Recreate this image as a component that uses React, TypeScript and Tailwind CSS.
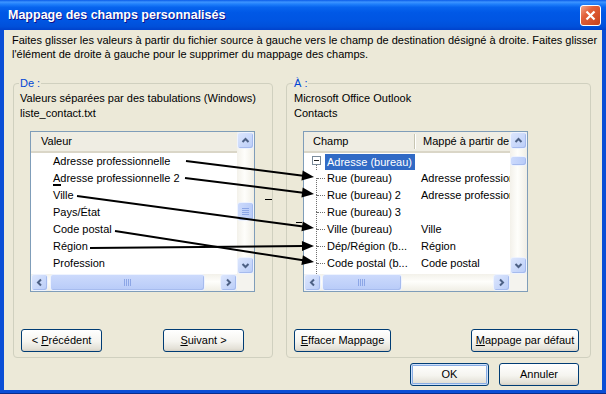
import React from "react"

type Dir = "up" | "down" | "left" | "right"

function Chevron({ dir }: { dir: Dir }) {
  const d = {
    up: "M1.5 6 L4.5 3 L7.5 6",
    down: "M1.5 3 L4.5 6 L7.5 3",
    left: "M6 1.5 L3 4.5 L6 7.5",
    right: "M3 1.5 L6 4.5 L3 7.5",
  }[dir]
  return (
    <svg width="9" height="9" viewBox="0 0 9 9">
      <path d={d} fill="none" stroke="#4D6185" strokeWidth="2" />
    </svg>
  )
}

function ScrollBtn({ dir }: { dir: Dir }) {
  return (
    <div className="w-[17px] h-[17px] shrink-0 flex items-center justify-center rounded-[3px] border border-[#EEF3FE] bg-[linear-gradient(135deg,#DCE6FD,#BACDF8)] shadow-[inset_-1px_-1px_0_#A6BBEE]">
      <Chevron dir={dir} />
    </div>
  )
}

function VScroll({ thumbTop, thumbH }: { thumbTop: number; thumbH: number }) {
  return (
    <div className="w-[17px] shrink-0 flex flex-col bg-[linear-gradient(90deg,#F3F1EA,#FEFEFB_45%,#F0EEE5)]">
      <ScrollBtn dir="up" />
      <div
        className="mx-auto w-[17px] rounded-[3px] border border-[#EEF3FE] bg-[linear-gradient(90deg,#CCDAFC,#B8CBF8)] shadow-[inset_-1px_-1px_0_#A6BBEE] flex items-center justify-center"
        style={{ marginTop: thumbTop, height: thumbH }}
      >
        {thumbH > 14 && (
          <svg width="7" height="8" viewBox="0 0 7 8">
            {[0, 2, 4, 6].map((y) => (
              <line key={y} x1="0" x2="7" y1={y + 0.5} y2={y + 0.5} stroke="#8CA6E6" />
            ))}
          </svg>
        )}
      </div>
      <div className="mt-auto">
        <ScrollBtn dir="down" />
      </div>
    </div>
  )
}

function HScroll({ thumbLeft, thumbW }: { thumbLeft: number; thumbW: number }) {
  return (
    <div className="flex-1 flex h-[17px] bg-[linear-gradient(180deg,#F3F1EA,#FEFEFB_45%,#F0EEE5)]">
      <ScrollBtn dir="left" />
      <div
        className="h-[17px] rounded-[3px] border border-[#EEF3FE] bg-[linear-gradient(180deg,#CCDAFC,#B8CBF8)] shadow-[inset_-1px_-1px_0_#A6BBEE] flex items-center justify-center"
        style={{ marginLeft: thumbLeft, width: thumbW }}
      >
        <svg width="8" height="7" viewBox="0 0 8 7">
          {[0, 2, 4, 6].map((x) => (
            <line key={x} y1="0" y2="7" x1={x + 0.5} x2={x + 0.5} stroke="#8CA6E6" />
          ))}
        </svg>
      </div>
      <div className="ml-auto">
        <ScrollBtn dir="right" />
      </div>
    </div>
  )
}

function XpButton({
  children,
  className = "",
  primary = false,
}: {
  children: React.ReactNode
  className?: string
  primary?: boolean
}) {
  return (
    <button
      className={
        "h-[23px] shrink-0 rounded-[3px] border border-[#003C74] bg-[linear-gradient(180deg,#FFFFFF_0%,#F5F4EF_55%,#E3E0D6_90%,#D6D0C5_100%)] text-[11px] leading-none text-black " +
        (primary ? "shadow-[inset_0_0_0_1px_#CEE0FA,inset_0_0_0_2px_#89ADE4] " : "") +
        className
      }
    >
      {children}
    </button>
  )
}

const leftRows = [
  "Adresse professionnelle",
  "Adresse professionnelle 2",
  "Ville",
  "Pays/État",
  "Code postal",
  "Région",
  "Profession",
]

const rightRows = [
  ["Rue (bureau)", "Adresse professionnelle"],
  ["Rue (bureau) 2", "Adresse professionnelle"],
  ["Rue (bureau) 3", ""],
  ["Ville (bureau)", "Ville"],
  ["Dép/Région (b...", "Région"],
  ["Code postal (b...", "Code postal"],
]

function LeftList() {
  return (
    <div className="ml-[16px] mt-[10px] w-[225px] h-[161px] shrink-0 border border-[#7F9DB9] bg-white flex flex-col">
      <div className="flex flex-1 min-h-0">
        <div className="flex-1 min-w-0 overflow-hidden">
          <div className="h-[21px] pl-[10px] flex items-center bg-[#EFEDE3] border-b-2 border-[#DAD6C7]">Valeur</div>
          {leftRows.map((r) => (
            <div key={r} className="h-[17px] leading-[17px] pl-[22px] whitespace-nowrap">
              {r}
            </div>
          ))}
        </div>
        <VScroll thumbTop={53} thumbH={19} />
      </div>
      <div className="flex">
        <HScroll thumbLeft={2} thumbW={155} />
        <div className="w-[17px] bg-[#F4F3EE]" />
      </div>
    </div>
  )
}

function RightList() {
  return (
    <div className="ml-[16px] mt-[10px] w-[225px] h-[161px] shrink-0 border border-[#7F9DB9] bg-white flex flex-col">
      <div className="flex flex-1 min-h-0">
        <div className="flex-1 min-w-0 overflow-hidden">
          <div className="h-[21px] flex items-center bg-[#EFEDE3] border-b-2 border-[#DAD6C7] whitespace-nowrap">
            <div className="w-[110px] pl-[9px]">Champ</div>
            <div className="w-[2px] h-[15px] border-l border-[#C7C5B2] bg-white" />
            <div className="pl-[7px]">Mappé à partir de</div>
          </div>
          <div className="h-[17px] flex items-center">
            <div className="w-[21px] h-[17px] flex flex-col">
              <div className="ml-[8px] mt-[3px] w-[9px] h-[9px] border border-[#7A8A99] bg-white flex items-center justify-center">
                <div className="w-[5px] h-[1px] bg-[#222]" />
              </div>
              <div className="ml-[12px] flex-1 border-l border-dotted border-[#6E6E6E]" />
            </div>
            <div className="w-[90px] h-[16px] leading-[16px] px-[2px] bg-[#316AC5] text-white whitespace-nowrap">
              Adresse (bureau)
            </div>
          </div>
          {rightRows.map(([a, b]) => (
            <div key={a} className="h-[17px] leading-[17px] flex whitespace-nowrap">
              <div className="w-[21px] h-[17px] shrink-0">
                <div className="ml-[12px] h-full border-l border-dotted border-[#6E6E6E]">
                  <div className="mt-[8px] w-[8px] border-t border-dotted border-[#6E6E6E]" />
                </div>
              </div>
              <div className="w-[90px] shrink-0 pl-[2px] overflow-hidden">{a}</div>
              <div className="pl-[6px] overflow-hidden">{b}</div>
            </div>
          ))}
        </div>
        <VScroll thumbTop={7} thumbH={10} />
      </div>
      <div className="flex">
        <HScroll thumbLeft={1} thumbW={80} />
        <div className="w-[17px] bg-[#F4F3EE]" />
      </div>
    </div>
  )
}

const arrows = [
  [186, 161, 314, 177],
  [185, 178, 314, 194],
  [77, 196, 314, 228],
  [115, 231, 314, 262],
  [90, 248, 314, 246],
]

function Arrow({ x1, y1, x2, y2 }: { x1: number; y1: number; x2: number; y2: number }) {
  const dx = x2 - x1
  const dy = y2 - y1
  const len = Math.hypot(dx, dy)
  const ux = dx / len
  const uy = dy / len
  const L = 12
  const W = 5
  const bx = x2 - ux * L
  const by = y2 - uy * L
  const pts = `${x2},${y2} ${bx - uy * W},${by + ux * W} ${bx + uy * W},${by - ux * W}`
  return (
    <g>
      <line x1={x1} y1={y1} x2={bx + ux} y2={by + uy} stroke="#000" strokeWidth="2" />
      <polygon points={pts} fill="#000" />
    </g>
  )
}

export default function App() {
  return (
    <div className="relative w-[606px] h-[394px] flex flex-col bg-[#0A4ED6] border-b border-[#0A2D8B] font-['Tahoma','Liberation_Sans',Arial,sans-serif] text-[11px] text-black overflow-hidden">
      {/* barre de titre */}
      <div className="h-[30px] shrink-0 flex items-center pl-[8px] pr-[5px] bg-[linear-gradient(180deg,#0A5BE8_0%,#3D95FF_7%,#1F7FFB_14%,#0764EE_24%,#0058E6_42%,#0055E2_70%,#0050DA_88%,#0042CC_100%)]">
        <span className="pt-[1px] text-[12.5px] font-bold text-white font-['Liberation_Sans',Arial,sans-serif] [text-shadow:1px_1px_#0F1089]">
          Mappage des champs personnalisés
        </span>
        <div className="ml-auto w-[21px] h-[21px] rounded-[3px] border border-white bg-[linear-gradient(135deg,#F3A78B_0%,#E2603A_35%,#C8421B_100%)] flex items-center justify-center">
          <svg width="11" height="11" viewBox="0 0 11 11">
            <path d="M1.5 1.5 L9.5 9.5 M9.5 1.5 L1.5 9.5" stroke="#fff" strokeWidth="2.2" />
          </svg>
        </div>
      </div>

      {/* contenu */}
      <div className="flex-1 mx-[4px] mb-[3px] bg-[#ECE9D8] flex flex-col">
        <div className="pl-[8px] pt-[3px] leading-[14px] whitespace-nowrap">
          <div>
            Faites glisser les valeurs à partir du fichier source à gauche vers le champ de destination désigné à droite. Faites glisser
          </div>
          <div>l'élément de droite à gauche pour le supprimer du mappage des champs.</div>
        </div>

        <div className="mt-[15px] ml-[9px] flex gap-[13px]">
          <fieldset className="w-[260px] h-[282px] border border-[#D0D0BF] rounded-[4px] flex flex-col">
            <legend className="ml-[5px] px-[1px] leading-[14px] text-[#0046D5]">De :</legend>
            <div className="pl-[6px] pt-[1px] leading-[15px] whitespace-nowrap">
              <div>Valeurs séparées par des tabulations (Windows)</div>
              <div>liste_contact.txt</div>
            </div>
            <LeftList />
            <div className="mt-auto mb-[5px] flex">
              <XpButton className="ml-[7px] w-[81px]">
                &lt; <span className="underline">P</span>récédent
              </XpButton>
              <XpButton className="ml-[61px] w-[81px]">
                <span className="underline">S</span>uivant &gt;
              </XpButton>
            </div>
          </fieldset>

          <fieldset className="w-[305px] h-[282px] border border-[#D0D0BF] rounded-[4px] flex flex-col">
            <legend className="ml-[6px] px-[1px] leading-[14px] text-[#0046D5]">À :</legend>
            <div className="pl-[7px] pt-[1px] leading-[15px] whitespace-nowrap">
              <div>Microsoft Office Outlook</div>
              <div>Contacts</div>
            </div>
            <RightList />
            <div className="mt-auto mb-[5px] flex">
              <XpButton className="ml-[7px] w-[97px]">
                <span className="underline">E</span>ffacer Mappage
              </XpButton>
              <XpButton className="ml-[80px] w-[108px]">
                <span className="underline">M</span>appage par défaut
              </XpButton>
            </div>
          </fieldset>
        </div>

        <div className="mt-[5px] pr-[23px] flex justify-end gap-[10px]">
          <XpButton primary className="w-[79px]">
            OK
          </XpButton>
          <XpButton className="w-[80px]">Annuler</XpButton>
        </div>
      </div>

      {/* flèches de mappage */}
      <svg className="absolute inset-0 pointer-events-none" width="606" height="394" viewBox="0 0 606 394">
        {arrows.map(([x1, y1, x2, y2], i) => (
          <Arrow key={i} x1={x1} y1={y1} x2={x2} y2={y2} />
        ))}
        <line x1="53" x2="61" y1="185" y2="185" stroke="#000" strokeWidth="2" />
        <line x1="265" x2="272" y1="199.5" y2="199.5" stroke="#000" />
        <line x1="296" x2="302" y1="222.5" y2="222.5" stroke="#000" />
      </svg>
    </div>
  )
}
